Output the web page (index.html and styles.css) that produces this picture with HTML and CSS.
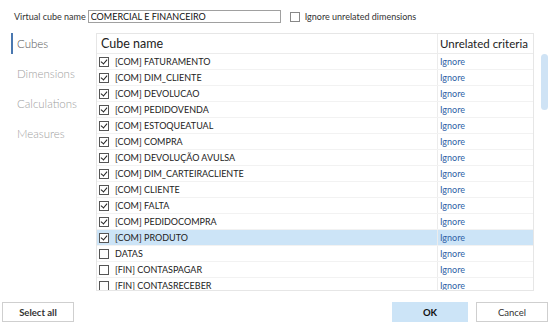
FILE: index.html
```html
<!DOCTYPE html>
<html lang="en">
<head>
    <title>Virtual cube</title>
    <meta charset="utf-8">
    <link rel="stylesheet" href="styles.css">
</head>
<body>
    <div class="dialog">
        <!-- Name row -->
        <div class="name-row">
            <label class="name-label" for="cubeName">Virtual cube name</label>
            <input class="name-input" id="cubeName" type="text" value="COMERCIAL E FINANCEIRO">
            <span class="cb"></span>
            <span class="opt-label">Ignore unrelated dimensions</span>
        </div>

        <div class="body-row">
            <!-- Left navigation -->
            <nav class="nav">
                <div class="nav-item active">Cubes</div>
                <div class="nav-item">Dimensions</div>
                <div class="nav-item">Calculations</div>
                <div class="nav-item">Measures</div>
            </nav>

            <!-- Cube table -->
            <div class="grid">
                <div class="grid-head">
                    <div class="col-name">Cube name</div>
                    <div class="col-crit">Unrelated criteria</div>
                </div>
                <div class="grid-rows">
                    <div class="row"><div class="col-name"><span class="cb on"></span>[COM] FATURAMENTO</div><div class="col-crit">Ignore</div></div>
                    <div class="row"><div class="col-name"><span class="cb on"></span>[COM] DIM_CLIENTE</div><div class="col-crit">Ignore</div></div>
                    <div class="row"><div class="col-name"><span class="cb on"></span>[COM] DEVOLUCAO</div><div class="col-crit">Ignore</div></div>
                    <div class="row"><div class="col-name"><span class="cb on"></span>[COM] PEDIDOVENDA</div><div class="col-crit">Ignore</div></div>
                    <div class="row"><div class="col-name"><span class="cb on"></span>[COM] ESTOQUEATUAL</div><div class="col-crit">Ignore</div></div>
                    <div class="row"><div class="col-name"><span class="cb on"></span>[COM] COMPRA</div><div class="col-crit">Ignore</div></div>
                    <div class="row"><div class="col-name"><span class="cb on"></span>[COM] DEVOLUÇÃO AVULSA</div><div class="col-crit">Ignore</div></div>
                    <div class="row"><div class="col-name"><span class="cb on"></span>[COM] DIM_CARTEIRACLIENTE</div><div class="col-crit">Ignore</div></div>
                    <div class="row"><div class="col-name"><span class="cb on"></span>[COM] CLIENTE</div><div class="col-crit">Ignore</div></div>
                    <div class="row"><div class="col-name"><span class="cb on"></span>[COM] FALTA</div><div class="col-crit">Ignore</div></div>
                    <div class="row"><div class="col-name"><span class="cb on"></span>[COM] PEDIDOCOMPRA</div><div class="col-crit">Ignore</div></div>
                    <div class="row selected"><div class="col-name"><span class="cb on"></span>[COM] PRODUTO</div><div class="col-crit">Ignore</div></div>
                    <div class="row"><div class="col-name"><span class="cb"></span>DATAS</div><div class="col-crit">Ignore</div></div>
                    <div class="row"><div class="col-name"><span class="cb"></span>[FIN] CONTASPAGAR</div><div class="col-crit">Ignore</div></div>
                    <div class="row"><div class="col-name"><span class="cb"></span>[FIN] CONTASRECEBER</div><div class="col-crit">Ignore</div></div>
                </div>
            </div>

            <!-- Scrollbar -->
            <div class="scroll">
                <div class="thumb"></div>
            </div>
        </div>

        <!-- Buttons -->
        <div class="button-row">
            <button class="btn bold">Select all</button>
            <span class="spacer"></span>
            <button class="btn bold primary">OK</button>
            <button class="btn">Cancel</button>
        </div>
    </div>
</body>
</html>
```

FILE: styles.css
```css
/* General styles */
body {
    margin: 0;
    padding: 0;
    background: #ffffff;
    font-family: 'Lato', 'Open Sans', sans-serif;
    color: #222;
}

.dialog {
    width: 556px;
    height: 330px;
    overflow: hidden;
}

/* Name row */
.name-row {
    display: flex;
    align-items: center;
    height: 13px;
    padding: 10px 0 0 14px;
    font-size: 9px;
}

.name-label {
    color: #333;
    margin-right: 2px;
}

.name-input {
    box-sizing: border-box;
    width: 193px;
    height: 13px;
    padding: 0 2px;
    border: 1px solid #a0a0a0;
    font-family: inherit;
    font-size: 9px;
    color: #111;
    outline: none;
}

.name-row .cb {
    margin: 0 5px 0 9px;
    border-color: #888;
}

.opt-label {
    color: #333;
}

/* Checkboxes */
.cb {
    display: inline-block;
    position: relative;
    box-sizing: border-box;
    width: 10px;
    height: 10px;
    border: 1px solid #555;
    background: #fff;
    flex: none;
}

.cb.on::after {
    content: "";
    position: absolute;
    left: 2px;
    top: 0px;
    width: 3px;
    height: 5px;
    border: solid #222;
    border-width: 0 1.5px 1.5px 0;
    transform: rotate(40deg);
}

/* Body */
.body-row {
    display: flex;
    margin-top: 10px;
}

.nav {
    width: 85px;
    padding-left: 11px;
    flex: none;
}

.nav-item {
    height: 21px;
    line-height: 21px;
    margin-bottom: 9px;
    padding-left: 4px;
    font-size: 11.5px;
    font-weight: 300;
    color: #a0a0a0;
    border-left: 2px solid transparent;
}

.nav-item.active {
    border-left-color: #4a78b0;
    color: #555;
}

/* Cube table */
.grid {
    box-sizing: border-box;
    width: 438px;
    height: 258px;
    border: 1px solid #e6e6e6;
    overflow: hidden;
}

.grid-head {
    display: flex;
    height: 19px;
    border-bottom: 1px solid #ececec;
    font-size: 12.5px;
    line-height: 19px;
    color: #222;
}

.grid-head .col-name {
    padding-left: 4px;
}

.grid-head .col-crit {
    padding-left: 2px;
    font-size: 11.5px;
    white-space: nowrap;
}

.col-name {
    box-sizing: border-box;
    width: 341px;
    flex: none;
    border-right: 1px solid #ececec;
}

.col-crit {
    flex: 1;
}

.row {
    display: flex;
    height: 15px;
    line-height: 15px;
    border-bottom: 1px solid #f2f2f2;
    font-size: 9px;
}

.row .col-name {
    display: flex;
    align-items: center;
    padding-left: 2px;
    color: #222;
}

.row .col-name .cb {
    margin-right: 6px;
}

.row .col-crit {
    padding-left: 2px;
    color: #2f5fa6;
}

.row.selected {
    background: #cce4f7;
}

/* Scrollbar */
.scroll {
    width: 7px;
    margin-left: 7px;
    padding-top: 21px;
}

.thumb {
    height: 56px;
    border-radius: 4px;
    background: #cfe3f5;
}

/* Buttons */
.button-row {
    display: flex;
    padding: 11px 8px 0 2px;
}

.spacer {
    flex: 1;
}

.btn {
    box-sizing: border-box;
    width: 72px;
    height: 20px;
    border: 1px solid #cfcfcf;
    background: #fff;
    font-family: inherit;
    font-size: 9.5px;
    color: #333;
    margin-left: 8px;
}

.button-row .btn:first-child {
    margin-left: 0;
}

.btn.bold {
    font-weight: bold;
}

.btn.primary {
    width: 76px;
    background: #cce4f7;
    border-color: #cce4f7;
    color: #111;
}
```
